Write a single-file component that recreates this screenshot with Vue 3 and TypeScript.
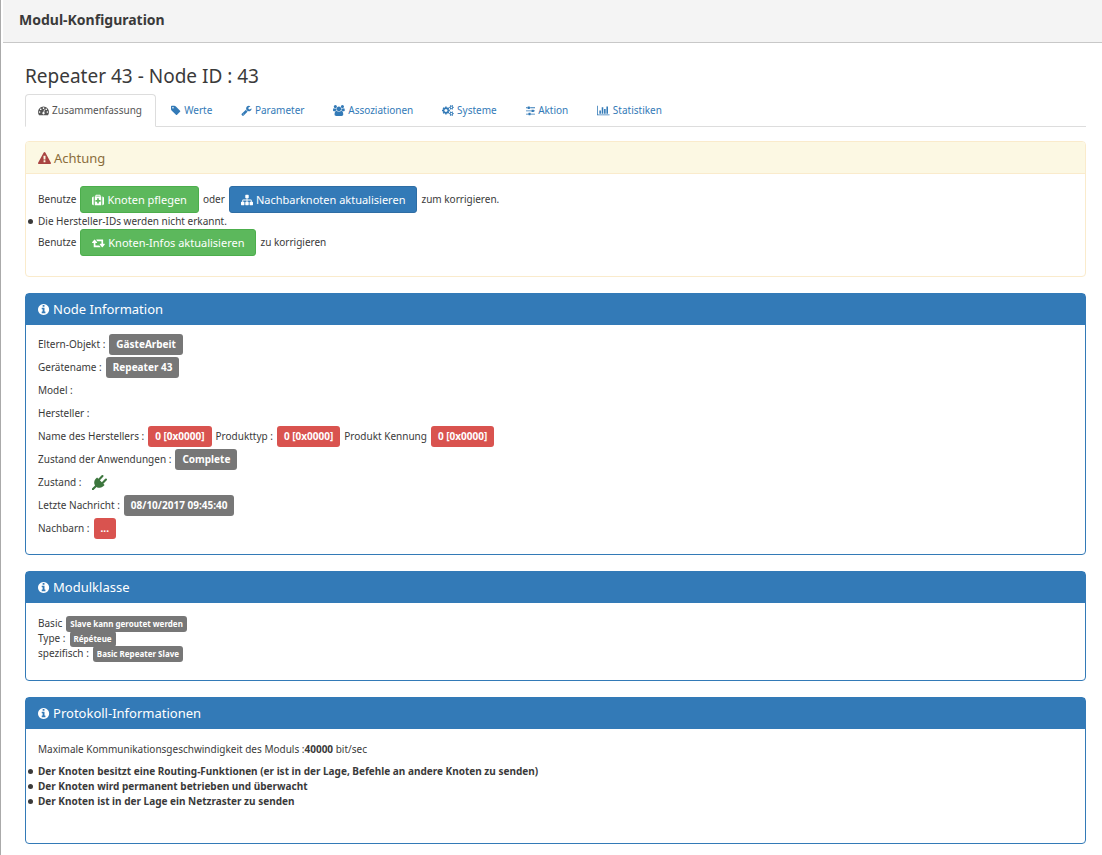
<script setup lang="ts">
import { ref } from 'vue'

interface Icon {
  width: number
  path: string
}

interface Tab {
  id: string
  label: string
  icon: string
}

interface InfoPart {
  text: string
  badge?: string
  tone?: 'grey' | 'red'
}

const cog =
  'v140q0 16-149 31-12 27-30 52 51 113 51 138 0 4-4 7-122 71-124 71-8 0-46-47t-52-68q-20 2-30 2t-30-2q-14 21-52 68t-46 47q-2 0-124-71-4-3-4-7 0-25 51-138-18-25-30-52-149-15-149-31v-140q0-16 149-31 13-29 30-52-51-113-51-138 0-4 4-7 4-2 35-20t59-34 30-16q8 0 46 46.5t52 67.5q20-2 30-2t30 2q51-71 92-112l6-2q4 0 124 70 4 3 4 7 0 25-51 138 17 23 30 52 149 15 149 31z'

const icons: Record<string, Icon> = {
  gauge: {
    width: 1792,
    path: 'M384 1152q0-53-37.5-90.5t-90.5-37.5-90.5 37.5-37.5 90.5 37.5 90.5 90.5 37.5 90.5-37.5 37.5-90.5zm192-448q0-53-37.5-90.5t-90.5-37.5-90.5 37.5-37.5 90.5 37.5 90.5 90.5 37.5 90.5-37.5 37.5-90.5zm428 481l101-382q6-26-7.5-48.5t-38.5-29.5-48 6.5-30 39.5l-101 382q-60 5-107 43.5t-63 98.5q-20 77 20 146t117 89 146-20 89-117q16-60-6-117t-72-91zm660-33q0-53-37.5-90.5t-90.5-37.5-90.5 37.5-37.5 90.5 37.5 90.5 90.5 37.5 90.5-37.5 37.5-90.5zm-640-640q0-53-37.5-90.5t-90.5-37.5-90.5 37.5-37.5 90.5 37.5 90.5 90.5 37.5 90.5-37.5 37.5-90.5zm448 192q0-53-37.5-90.5t-90.5-37.5-90.5 37.5-37.5 90.5 37.5 90.5 90.5 37.5 90.5-37.5 37.5-90.5zm320 448q0 261-141 483-19 29-54 29h-1402q-35 0-54-29-141-221-141-483 0-182 71-348t191-286 286-191 348-71 348 71 286 191 191 286 71 348z',
  },
  tag: {
    width: 1664,
    path: 'M448 448q0-53-37.5-90.5t-90.5-37.5-90.5 37.5-37.5 90.5 37.5 90.5 90.5 37.5 90.5-37.5 37.5-90.5zm1067 576q0 53-37 90l-491 492q-39 37-91 37-53 0-90-37l-715-716q-38-37-64.5-101t-26.5-117v-416q0-52 38-90t90-38h416q53 0 117 26.5t102 64.5l715 714q37 39 37 91z',
  },
  wrench: {
    width: 1728,
    path: 'M448 1472q0-26-19-45t-45-19-45 19-19 45 19 45 45 19 45-19 19-45zm644-420l-682 682q-37 37-90 37-52 0-91-37l-106-108q-38-36-38-90 0-53 38-91l681-681q39 98 114.5 173.5t173.5 114.5zm634-435q0 39-23 106-47 134-164.5 217.5t-258.5 83.5q-185 0-316.5-131.5t-131.5-316.5 131.5-316.5 316.5-131.5q58 0 121.5 16.5t107.5 46.5q16 11 16 28t-16 28l-293 169v224l193 107q5-3 79-48.5t135.5-81 70.5-35.5q15 0 23.5 10t8.5 25z',
  },
  users: {
    width: 1920,
    path: 'M593 896q-162 5-265 128h-134q-82 0-138-40.5t-56-118.5q0-353 124-353 6 0 43.5 21t97.5 42.5 119 21.5q67 0 133-23-5 37-5 66 0 139 81 256zm1071 637q0 120-73 189.5t-194 69.5h-874q-121 0-194-69.5t-73-189.5q0-53 3.5-103.5t14-109 26.5-108.5 43-97.5 62-81 85.5-53.5 111.5-20q10 0 43 21.5t73 48 107 48 135 21.5 135-21.5 107-48 73-48 43-21.5q61 0 111.5 20t85.5 53.5 62 81 43 97.5 26.5 108.5 14 109 3.5 103.5zm-1024-1277q0 106-75 181t-181 75-181-75-75-181 75-181 181-75 181 75 75 181zm704 384q0 159-112.5 271.5t-271.5 112.5-271.5-112.5-112.5-271.5 112.5-271.5 271.5-112.5 271.5 112.5 112.5 271.5zm576 225q0 78-56 118.5t-138 40.5h-134q-103-123-265-128 81-117 81-256 0-29-5-66 66 23 133 23 59 0 119-21.5t97.5-42.5 43.5-21q124 0 124 353zm-128-609q0 106-75 181t-181 75-181-75-75-181 75-181 181-75 181 75 75 181z',
  },
  cogs: {
    width: 1920,
    path:
      'M896 896q0-106-75-181t-181-75-181 75-75 181 75 181 181 75 181-75 75-181zm768 512q0-52-38-90t-90-38-90 38-38 90q0 53 37.5 90.5t90.5 37.5 90.5-37.5 37.5-90.5zm0-1024q0-52-38-90t-90-38-90 38-38 90q0 53 37.5 90.5t90.5 37.5 90.5-37.5 37.5-90.5zm-384 421v185q0 10-7 19.5t-16 10.5l-155 24q-11 35-32 76 34 48 90 115 7 11 7 20 0 12-7 19-23 30-82.5 89.5t-78.5 59.5q-11 0-21-7l-115-90q-37 19-77 31-11 108-23 155-7 24-30 24h-186q-11 0-20-7.5t-10-17.5l-23-153q-34-10-75-31l-118 89q-7 7-20 7-11 0-21-8-144-133-144-160 0-9 7-19 10-14 41-53t47-61q-23-44-35-82l-152-24q-10-1-17-9.5t-7-19.5v-185q0-10 7-19.5t16-10.5l155-24q11-35 32-76-34-48-90-115-7-11-7-20 0-12 7-20 22-30 82-89t79-59q11 0 21 7l115 90q34-18 77-32 11-108 23-154 7-24 30-24h186q11 0 20 7.5t10 17.5l23 153q34 10 75 31l118-89q8-7 20-7 11 0 21 8 144 133 144 160 0 8-7 19-12 16-42 54t-45 60q23 48 34 82l152 23q10 2 17 10.5t7 19.5zm640 533' +
      cog +
      'm0-1024' +
      cog,
  },
  sliders: {
    width: 1536,
    path: 'M352 1408v128h-352v-128h352zm352-128q26 0 45 19t19 45v256q0 26-19 45t-45 19h-256q-26 0-45-19t-19-45v-256q0-26 19-45t45-19h256zm160-384v128h-864v-128h864zm-640-512v128h-224v-128h224zm1312 1024v128h-736v-128h736zm-960-1152q26 0 45 19t19 45v256q0 26-19 45t-45 19h-256q-26 0-45-19t-19-45v-256q0-26 19-45t45-19h256zm640 512q26 0 45 19t19 45v256q0 26-19 45t-45 19h-256q-26 0-45-19t-19-45v-256q0-26 19-45t45-19h256zm320 128v128h-288v-128h288zm0-512v128h-864v-128h864z',
  },
  chart: {
    width: 2048,
    path: 'M640 896v512h-256v-512h256zm384-512v1024h-256v-1024h256zm1024 1152v128h-2048v-1536h128v1408h1920zm-640-896v768h-256v-768h256zm384-384v1152h-256v-1152h256z',
  },
  warning: {
    width: 1792,
    path: 'M1024 1375v-190q0-14-9.5-23.5t-22.5-9.5h-192q-13 0-22.5 9.5t-9.5 23.5v190q0 14 9.5 23.5t22.5 9.5h192q13 0 22.5-9.5t9.5-23.5zm-2-374l18-459q0-12-10-19-13-11-24-11h-220q-11 0-24 11-10 7-10 21l17 457q0 10 10 16.5t24 6.5h185q14 0 23.5-6.5t10.5-16.5zm-14-934l768 1408q35 63-2 126-17 29-46.5 46t-63.5 17h-1536q-34 0-63.5-17t-46.5-46q-37-63-2-126l768-1408q17-31 47-49t65-18 65 18 47 49z',
  },
  medkit: {
    width: 1792,
    path: 'M1280 1120v-192q0-14-9-23t-23-9h-224v-224q0-14-9-23t-23-9h-192q-14 0-23 9t-9 23v224h-224q-14 0-23 9t-9 23v192q0 14 9 23t23 9h224v224q0 14 9 23t23 9h192q14 0 23-9t9-23v-224h224q14 0 23-9t9-23zm-640-736h512v-128h-512v128zm-384 0v1280h-32q-92 0-158-66t-66-158v-832q0-92 66-158t158-66h32zm1120 0v1280h-960v-1280h96v-160q0-40 28-68t68-28h576q40 0 68 28t28 68v160h96zm416 224v832q0 92-66 158t-158 66h-32v-1280h32q92 0 158 66t66 158z',
  },
  sitemap: {
    width: 1792,
    path: 'M1792 1248v320q0 40-28 68t-68 28h-320q-40 0-68-28t-28-68v-320q0-40 28-68t68-28h96v-192h-512v192h96q40 0 68 28t28 68v320q0 40-28 68t-68 28h-320q-40 0-68-28t-28-68v-320q0-40 28-68t68-28h96v-192h-512v192h96q40 0 68 28t28 68v320q0 40-28 68t-68 28h-320q-40 0-68-28t-28-68v-320q0-40 28-68t68-28h96v-192q0-52 38-90t90-38h512v-192h-96q-40 0-68-28t-28-68v-320q0-40 28-68t68-28h320q40 0 68 28t28 68v320q0 40-28 68t-68 28h-96v192h512q52 0 90 38t38 90v192h96q40 0 68 28t28 68z',
  },
  retweet: {
    width: 1920,
    path: 'M1280 1504q0 13-9.5 22.5t-22.5 9.5h-960q-8 0-13.5-2t-9-7-5.5-8-3-11.5-1-11.5v-600h-192q-26 0-45-19t-19-45q0-24 15-41l320-384q19-22 49-22t49 22l320 384q15 17 15 41 0 26-19 45t-45 19h-192v384h576q16 0 25 11l160 192q7 10 7 21zm640-416q0 24-15 41l-320 384q-20 23-49 23t-49-23l-320-384q-15-17-15-41 0-26 19-45t45-19h192v-384h-576q-16 0-25-12l-160-192q-7-9-7-20 0-13 9.5-22.5t22.5-9.5h960q8 0 13.5 2t9 7 5.5 8 3 11.5 1 11.5v600h192q26 0 45 19t19 45z',
  },
  info: {
    width: 1664,
    path: 'M1024 1376v-160q0-14-9-23t-23-9h-96v-512q0-14-9-23t-23-9h-320q-14 0-23 9t-9 23v160q0 14 9 23t23 9h96v320h-96q-14 0-23 9t-9 23v160q0 14 9 23t23 9h448q14 0 23-9t9-23zm-128-896v-160q0-14-9-23t-23-9h-192q-14 0-23 9t-9 23v160q0 14 9 23t23 9h192q14 0 23-9t9-23zm640 416q0 209-103 385.5t-279.5 279.5-385.5 103-385.5-103-279.5-279.5-103-385.5 103-385.5 279.5-279.5 385.5-103 385.5 103 279.5 279.5 103 385.5z',
  },
  plug: {
    width: 1792,
    path: 'M1755 453q37 38 37 90.5t-37 90.5l-401 400 150 150-160 160q-163 163-389.5 186.5t-411.5-100.5l-362 362h-181v-181l362-362q-124-185-100.5-411.5t186.5-389.5l160-160 150 150 400-401q38-37 91-37t90 37 37 90.5-37 90.5l-400 401 234 234 401-400q38-37 91-37t90 37z',
  },
}

const box = (name: string): string => `0 0 ${icons[name].width} 1792`

const tabs: Tab[] = [
  { id: 'zusammenfassung', label: 'Zusammenfassung', icon: 'gauge' },
  { id: 'werte', label: 'Werte', icon: 'tag' },
  { id: 'parameter', label: 'Parameter', icon: 'wrench' },
  { id: 'assoziationen', label: 'Assoziationen', icon: 'users' },
  { id: 'systeme', label: 'Systeme', icon: 'cogs' },
  { id: 'aktion', label: 'Aktion', icon: 'sliders' },
  { id: 'statistiken', label: 'Statistiken', icon: 'chart' },
]
const activeTab = ref('zusammenfassung')

const identity: InfoPart[][] = [
  [{ text: 'Eltern-Objekt :', badge: 'GästeArbeit' }],
  [{ text: 'Gerätename :', badge: 'Repeater 43' }],
  [{ text: 'Model :' }],
  [{ text: 'Hersteller :' }],
  [
    { text: 'Name des Herstellers :', badge: '0 [0x0000]', tone: 'red' },
    { text: 'Produkttyp :', badge: '0 [0x0000]', tone: 'red' },
    { text: 'Produkt Kennung', badge: '0 [0x0000]', tone: 'red' },
  ],
  [{ text: 'Zustand der Anwendungen :', badge: 'Complete' }],
]

const status: InfoPart[] = [
  { text: 'Letzte Nachricht :', badge: '08/10/2017 09:45:40' },
  { text: 'Nachbarn :', badge: '...', tone: 'red' },
]

const classes: InfoPart[] = [
  { text: 'Basic', badge: 'Slave kann geroutet werden' },
  { text: 'Type :', badge: 'Répéteue' },
  { text: 'spezifisch :', badge: 'Basic Repeater Slave' },
]

const capabilities: string[] = [
  'Der Knoten besitzt eine Routing-Funktionen (er ist in der Lage, Befehle an andere Knoten zu senden)',
  'Der Knoten wird permanent betrieben und überwacht',
  'Der Knoten ist in der Lage ein Netzraster zu senden',
]
</script>

<template>
  <div class="dialog">
    <header class="titlebar">
      <h1>Modul-Konfiguration</h1>
    </header>

    <main class="content">
      <h2 class="node-title">Repeater 43 - Node ID : 43</h2>

      <nav class="tabs">
        <a
          v-for="tab in tabs"
          :key="tab.id"
          :href="'#' + tab.id"
          :class="{ active: tab.id === activeTab }"
          @click.prevent="activeTab = tab.id"
        >
          <svg class="icon" :viewBox="box(tab.icon)" aria-hidden="true"><path :d="icons[tab.icon].path" /></svg>
          <span>{{ tab.label }}</span>
        </a>
      </nav>

      <section class="panel warning">
        <h3>
          <svg class="icon danger" :viewBox="box('warning')" aria-hidden="true"><path :d="icons.warning.path" /></svg>
          <span>Achtung</span>
        </h3>
        <div class="body">
          <div class="line">
            <span>Benutze</span>
            <button type="button" class="btn green">
              <svg class="icon" :viewBox="box('medkit')" aria-hidden="true"><path :d="icons.medkit.path" /></svg>
              <span>Knoten pflegen</span>
            </button>
            <span>oder</span>
            <button type="button" class="btn blue">
              <svg class="icon" :viewBox="box('sitemap')" aria-hidden="true"><path :d="icons.sitemap.path" /></svg>
              <span>Nachbarknoten aktualisieren</span>
            </button>
            <span>zum korrigieren.</span>
          </div>
          <ul class="bullets hint">
            <li>Die Hersteller-IDs werden nicht erkannt.</li>
          </ul>
          <div class="line">
            <span>Benutze</span>
            <button type="button" class="btn green">
              <svg class="icon" :viewBox="box('retweet')" aria-hidden="true"><path :d="icons.retweet.path" /></svg>
              <span>Knoten-Infos aktualisieren</span>
            </button>
            <span>zu korrigieren</span>
          </div>
        </div>
      </section>

      <section class="panel primary">
        <h3>
          <svg class="icon" :viewBox="box('info')" aria-hidden="true"><path :d="icons.info.path" /></svg>
          <span>Node Information</span>
        </h3>
        <div class="body node">
          <div v-for="(row, i) in identity" :key="i" class="line">
            <template v-for="part in row" :key="part.text">
              <span>{{ part.text }}</span>
              <strong v-if="part.badge" class="badge" :class="part.tone">{{ part.badge }}</strong>
            </template>
          </div>
          <div class="line">
            <span>Zustand :</span>
            <svg class="plug" :viewBox="box('plug')" role="img" aria-label="Netzbetrieb"><path :d="icons.plug.path" /></svg>
          </div>
          <div v-for="part in status" :key="part.text" class="line">
            <span>{{ part.text }}</span>
            <strong class="badge" :class="part.tone">{{ part.badge }}</strong>
          </div>
        </div>
      </section>

      <section class="panel primary">
        <h3>
          <svg class="icon" :viewBox="box('info')" aria-hidden="true"><path :d="icons.info.path" /></svg>
          <span>Modulklasse</span>
        </h3>
        <div class="body classes">
          <div v-for="part in classes" :key="part.text" class="line">
            <span>{{ part.text }}</span>
            <strong class="badge small">{{ part.badge }}</strong>
          </div>
        </div>
      </section>

      <section class="panel primary">
        <h3>
          <svg class="icon" :viewBox="box('info')" aria-hidden="true"><path :d="icons.info.path" /></svg>
          <span>Protokoll-Informationen</span>
        </h3>
        <div class="body protocol">
          <p>Maximale Kommunikationsgeschwindigkeit des Moduls :<strong>40000</strong> bit/sec</p>
          <ul class="bullets bold">
            <li v-for="item in capabilities" :key="item">{{ item }}</li>
          </ul>
        </div>
      </section>
    </main>
  </div>
</template>

<style>
body {
  margin: 0;
  background: #fff;
}
</style>

<style scoped>
.dialog {
  min-height: 100vh;
  box-sizing: border-box;
  border-left: 1px solid #aaa;
  padding-left: 2px;
  background: #fff;
  color: #3a3a3a;
  font: 10px/15px 'Noto Sans', 'Open Sans', sans-serif;
}

h1,
h2,
h3,
p,
ul {
  margin: 0;
  padding: 0;
}

.titlebar {
  padding: 10px 16px 12px;
  border-bottom: 1px solid #c8c8c8;
  background: #f4f4f4;
}

.titlebar h1 {
  font-size: 14px;
  line-height: 20px;
}

.content {
  padding: 20px 16px 11px 22px;
}

.node-title {
  font-size: 19px;
  line-height: 26px;
  font-weight: 400;
}

.icon {
  flex: none;
  height: 1em;
  fill: currentColor;
}

.tabs {
  display: flex;
  gap: 2px;
  margin: 5px 0 14px;
  border-bottom: 1px solid #ddd;
}

.tabs a {
  display: flex;
  align-items: center;
  gap: 3px;
  margin-bottom: -1px;
  padding: 8px 13px 8px 12px;
  border: 1px solid transparent;
  border-radius: 4px 4px 0 0;
  color: #337ab7;
  text-decoration: none;
}

.tabs .icon {
  height: 11px;
}

.tabs a.active {
  border-color: #ddd #ddd #fff;
  background: #fff;
  color: #555;
}

.panel {
  margin-bottom: 16px;
  border: 1px solid #337ab7;
  border-radius: 4px;
}

.panel:last-child {
  margin-bottom: 0;
}

.panel h3 {
  display: flex;
  align-items: center;
  gap: 3px;
  padding: 6px 12px;
  background: #337ab7;
  color: #fff;
  font-size: 13px;
  line-height: 19px;
  font-weight: 400;
}

.panel.warning {
  border-color: #faebcc;
}

.panel.warning h3 {
  padding: 7px 12px 5px;
  border-bottom: 1px solid #faebcc;
  border-radius: 3px 3px 0 0;
  background: #fcf8e3;
  color: #8a6d3b;
}

.panel.warning .danger {
  color: #a94442;
}

.body {
  padding: 12px 12px 20px;
}

.line {
  display: flex;
  align-items: center;
  gap: 4px;
}

.btn {
  display: flex;
  align-items: center;
  gap: 3px;
  padding: 5px 11px;
  border: 1px solid;
  border-radius: 3px;
  color: #fff;
  font: inherit;
  font-size: 11px;
  line-height: 15px;
  cursor: pointer;
}

.btn .icon {
  height: 12px;
}

.btn.green {
  border-color: #4cae4c;
  background: #5cb85c;
}

.btn.blue {
  border-color: #2e6da4;
  background: #337ab7;
}

.bullets {
  list-style: none;
}

.bullets.bold {
  font-weight: 700;
}

.bullets.hint {
  padding-top: 1px;
}

.bullets li {
  position: relative;
}

.bullets li::before {
  content: '';
  position: absolute;
  top: 5px;
  left: -10px;
  width: 5px;
  height: 5px;
  border-radius: 50%;
  background: currentColor;
}

.body.node {
  padding: 8px 12px 14px;
}

.node .line {
  height: 23px;
}

.badge {
  padding: 3px 7px;
  border-radius: 3px;
  background: #777;
  color: #fff;
}

.badge.red {
  background: #d9534f;
}

.badge.small {
  padding: 0 4px;
  font-size: 8px;
  line-height: 16px;
}

.classes .line {
  height: 15px;
}

.plug {
  height: 15px;
  margin-left: 6px;
  fill: #3c763d;
}

.body.classes {
  padding: 13px 12px 19px;
}

.body.protocol {
  padding: 13px 12px 34px;
}

.protocol p {
  margin-bottom: 7px;
}
</style>
